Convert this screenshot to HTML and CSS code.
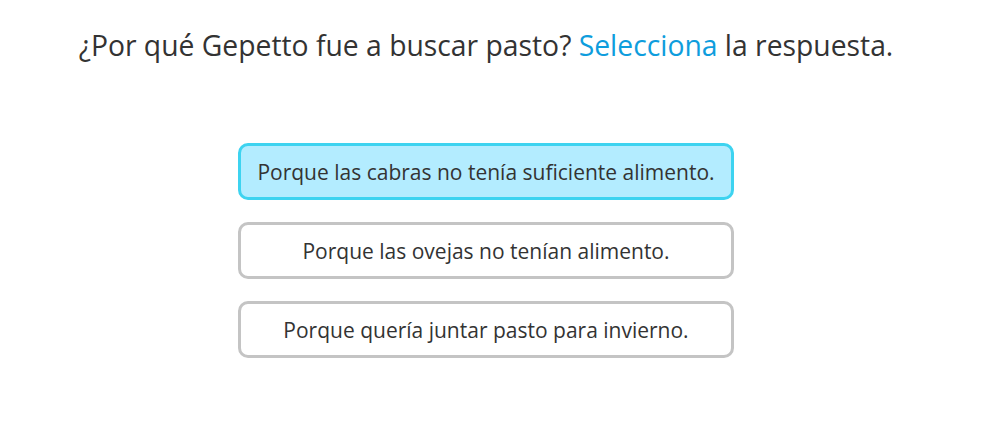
FILE: index.html
```html
<!DOCTYPE html>
<html lang="es">
<head>
<meta charset="utf-8">
<link rel="stylesheet" href="styles.css">
</head>
<body>
<main class="quiz">
  <h1 class="question">¿Por qué Gepetto fue a buscar pasto? <span class="accent">Selecciona</span> la respuesta.</h1>
  <div class="options">
    <button class="option selected">Porque las cabras no tenía suficiente alimento.</button>
    <button class="option">Porque las ovejas no tenían alimento.</button>
    <button class="option">Porque quería juntar pasto para invierno.</button>
  </div>
</main>
</body>
</html>
```
FILE: styles.css
```css
html, body {
  margin: 0;
  padding: 0;
  background: #ffffff;
}
body {
  font-family: "Open Sans", "Noto Sans", sans-serif;
  color: #333333;
}
.quiz {
  display: flex;
  flex-direction: column;
  align-items: center;
  padding-top: 25px;
  padding-right: 21px;
}
.question {
  margin: 0;
  font-size: 28.3px;
  font-weight: 400;
  line-height: 40px;
  color: #333333;
  text-align: center;
}
.accent {
  color: #0e9ddd;
}
.options {
  margin-top: 78px;
  display: flex;
  flex-direction: column;
  gap: 22px;
  width: 496px;
}
.option {
  box-sizing: border-box;
  height: 57px;
  width: 100%;
  border: 3px solid #c4c4c4;
  border-radius: 10px;
  background: #ffffff;
  font-family: inherit;
  font-size: 21px;
  color: #333333;
  padding: 0 10px;
  cursor: pointer;
}
.option.selected {
  background: #b3ecff;
  border-color: #3dd3f0;
}
```
